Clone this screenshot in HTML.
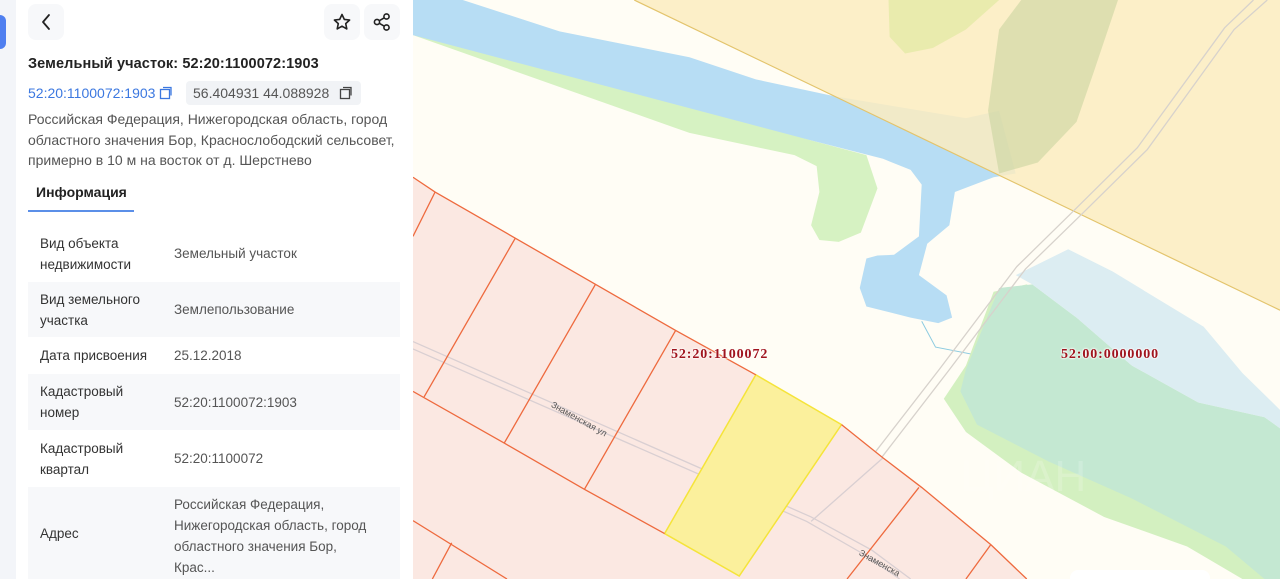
<!DOCTYPE html>
<html><head><meta charset="utf-8"><style>
*{margin:0;padding:0;box-sizing:border-box}
body{width:1280px;height:579px;overflow:hidden;position:relative;font-family:"Liberation Sans","Noto Sans CJK SC",sans-serif;background:#fffef7}
#strip{position:absolute;left:0;top:0;width:16px;height:579px;background:#f3f5f9}
#tab{position:absolute;left:0;top:15px;width:6px;height:34px;background:#4f7ff0;border-radius:0 6px 6px 0}
#panel{position:absolute;left:16px;top:0;width:397px;height:579px;background:#fff}
.btn{position:absolute;top:4px;width:36px;height:36px;border-radius:8px;background:#f7f8fa}
.t{position:absolute;white-space:nowrap}
table{position:absolute;left:28px;top:225px;width:372px;border-collapse:collapse;font-size:13.5px}
td{vertical-align:middle;line-height:21px}
td.k{color:#333;padding-left:12px;width:146px}
td.v{color:#555}
tr.g{background:#f7f8fa}
#map{position:absolute;left:413px;top:0;width:867px;height:579px;overflow:hidden}
.lbl{position:absolute;font-family:"Liberation Serif",serif;font-weight:bold;font-size:14px;letter-spacing:0.9px;color:#a0141e;text-shadow:0 0 2px #fff,0 0 2px #fff,0 0 2px #fff}
</style></head><body>
<div id="strip"></div><div id="tab"></div>
<div id="panel"></div>
<div class="btn" style="left:28px"><svg width="36" height="36"><path d="M21 11l-6 7 6 7" fill="none" stroke="#222" stroke-width="1.8" stroke-linecap="round" stroke-linejoin="round"/></svg></div>
<div class="btn" style="left:324px"><svg width="36" height="36"><path d="M18 10.5l2.3 4.9 5.3.6-3.9 3.6 1.1 5.3-4.8-2.7-4.8 2.7 1.1-5.3-3.9-3.6 5.3-.6z" fill="none" stroke="#222" stroke-width="1.6" stroke-linejoin="round"/></svg></div>
<div class="btn" style="left:364px"><svg width="36" height="36"><g fill="none" stroke="#222" stroke-width="1.6"><circle cx="22.5" cy="12.5" r="2.6"/><circle cx="13" cy="18" r="2.6"/><circle cx="22.5" cy="23.5" r="2.6"/><path d="M15.3 16.7l5-2.9M15.3 19.3l5 2.9"/></g></svg></div>
<div class="t" style="left:28px;top:56px;font-size:14.5px;font-weight:bold;color:#222;letter-spacing:0.1px">Земельный участок: 52:20:1100072:1903</div>
<div class="t" style="left:28px;top:85px;font-size:14px;color:#3c78e0">52:20:1100072:1903</div>
<svg style="position:absolute;left:159px;top:86px" width="14" height="14"><rect x="1.5" y="3.5" width="9" height="9" fill="none" stroke="#3c78e0" stroke-width="1.3"/><path d="M4 1.5h8v8" fill="none" stroke="#3c78e0" stroke-width="1.3"/></svg>
<div style="position:absolute;left:186px;top:81px;width:175px;height:24px;background:#f1f3f6;border-radius:4px"></div>
<div class="t" style="left:193px;top:85px;font-size:14px;color:#555">56.404931 44.088928</div>
<svg style="position:absolute;left:339px;top:86px" width="14" height="14"><rect x="1.5" y="3.5" width="9" height="9" fill="none" stroke="#444" stroke-width="1.3"/><path d="M4 1.5h8v8" fill="none" stroke="#444" stroke-width="1.3"/></svg>
<div class="t" style="left:28px;top:109px;font-size:14px;line-height:20.5px;color:#555">Российская Федерация, Нижегородская область, город<br>областного значения Бор, Краснослободский сельсовет,<br>примерно в 10 м на восток от д. Шерстнево</div>
<div class="t" style="left:36px;top:184px;font-size:14px;font-weight:bold;color:#222">Информация</div>
<div style="position:absolute;left:28px;top:210px;width:106px;height:2px;background:#5b8fe8"></div>
<table>
<tr style="height:57px"><td class="k">Вид объекта<br>недвижимости</td><td class="v">Земельный участок</td></tr>
<tr class="g" style="height:55px"><td class="k">Вид земельного<br>участка</td><td class="v">Землепользование</td></tr>
<tr style="height:37px"><td class="k">Дата присвоения</td><td class="v">25.12.2018</td></tr>
<tr class="g" style="height:56px"><td class="k">Кадастровый<br>номер</td><td class="v">52:20:1100072:1903</td></tr>
<tr style="height:57px"><td class="k">Кадастровый<br>квартал</td><td class="v">52:20:1100072</td></tr>
<tr class="g" style="height:92px"><td class="k">Адрес</td><td class="v" style="padding-top:6px">Российская Федерация,<br>Нижегородская область, город<br>областного значения Бор,<br>Крас...</td></tr>
</table>
<div id="map">
<svg width="867" height="579" viewBox="0 0 1568 1568" preserveAspectRatio="none" style="position:absolute;left:0;top:0">
<rect width="1568" height="1568" fill="#fffdf5"/>
<polygon points="0,95 500,360 690,420 730,450 735,520 720,610 735,650 770,655 810,630 840,510 820,420 720,380 0,60" fill="#d6f2c2"/>
<polygon points="0,0 90,0 265,85 500,155 620,215 760,260 1000,320 1060,300 1090,470 1050,480 980,520 970,610 930,660 915,745 965,800 975,860 950,875 900,860 820,830 808,780 820,700 840,692 870,690 915,640 920,500 900,460 850,430 720,380 0,95" fill="#b7ddf4"/>
<polygon points="400,0 1568,0 1568,840" fill="#fcecbf" opacity="0.85"/>
<line x1="400" y1="0" x2="1568" y2="840" stroke="#e3c46c" stroke-width="1.2" vector-effect="non-scaling-stroke"/>
<polygon points="860,0 1060,0 1000,80 940,130 890,145 862,100" fill="#e5eaa8" opacity="0.85"/>
<polygon points="1100,0 1275,0 1230,200 1200,330 1130,440 1060,470 1040,300 1060,80" fill="#c9d3a0" opacity="0.6"/>
<polyline points="920,870 945,940 1185,1010 1568,1260" fill="none" stroke="#8ccbe0" stroke-width="1" vector-effect="non-scaling-stroke"/>
<polygon points="1000,990 960,1080 1000,1170 1100,1280 1250,1400 1400,1480 1500,1568 1568,1568 1568,1160 1540,1130 1420,1090 1300,990 1200,860 1110,770 1050,790" fill="#d3f0c0"/>
<polygon points="1000,1000 1060,780 1120,770 1200,860 1300,990 1420,1090 1540,1130 1568,1160 1568,1568 1540,1568 1470,1480 1300,1350 1150,1250 1020,1150 990,1060" fill="#c4e8d2"/>
<polygon points="1090,745 1185,675 1265,735 1430,885 1500,1010 1568,1110 1568,1160 1540,1130 1420,1090 1300,990 1200,860 1120,770" fill="#dcedf2"/>
<g fill="none" stroke="#d7d2cc" stroke-width="1.3">
<polyline points="1520,0 1468,75 1310,400 1190,578 1092,722 952,1000 832,1232 712,1412" vector-effect="non-scaling-stroke"/>
<polyline points="1545,0 1485,80 1328,405 1208,582 1108,728 968,1005 848,1238 730,1425" vector-effect="non-scaling-stroke"/>
</g>
<polygon points="0,480 40,520 185,645 330,770 475,895 620,1015 775,1150 850,1240 920,1320 1045,1475 1110,1568 0,1568" fill="#fbe8e2"/>
<g fill="none" stroke="#d9cfd2" stroke-width="1.3">
<polyline points="0,925 720,1400 830,1490 900,1568" vector-effect="non-scaling-stroke"/>
<polyline points="0,945 712,1412 820,1505 880,1568" vector-effect="non-scaling-stroke"/>
<polyline points="720,1412 850,1240" vector-effect="non-scaling-stroke"/>
</g>
<polygon points="620,1015 775,1150 590,1560 455,1445" fill="#fbf09c" stroke="#f5e43a" stroke-width="1.5" vector-effect="non-scaling-stroke"/>
<g fill="none" stroke="#ee6a3e" stroke-width="1.3">
<polyline points="0,480 40,520 185,645 330,770 475,895 620,1015" vector-effect="non-scaling-stroke"/>
<polyline points="775,1150 850,1240 920,1320 1045,1475 1110,1568" vector-effect="non-scaling-stroke"/>
<line x1="40" y1="520" x2="0" y2="640" vector-effect="non-scaling-stroke"/>
<line x1="185" y1="645" x2="20" y2="1075" vector-effect="non-scaling-stroke"/>
<line x1="330" y1="770" x2="165" y2="1200" vector-effect="non-scaling-stroke"/>
<line x1="475" y1="895" x2="310" y2="1325" vector-effect="non-scaling-stroke"/>
<line x1="915" y1="1320" x2="785" y2="1568" vector-effect="non-scaling-stroke"/>
<line x1="1045" y1="1475" x2="1000" y2="1568" vector-effect="non-scaling-stroke"/>
<polyline points="0,1060 165,1200 310,1325 455,1445" vector-effect="non-scaling-stroke"/>
<polyline points="0,1410 170,1568" vector-effect="non-scaling-stroke"/>
<line x1="70" y1="1470" x2="35" y2="1568" vector-effect="non-scaling-stroke"/>
</g>
</svg>
<div class="lbl" style="left:258px;top:347px">52:20:1100072</div>
<div class="lbl" style="left:648px;top:347px">52:00:0000000</div>
<div class="t" style="left:135px;top:414px;font-size:9px;color:#555;transform:rotate(29deg)">Знаменская ул</div>
<div class="t" style="left:444px;top:558px;font-size:9px;color:#555;transform:rotate(29deg)">Знаменска</div>
<div class="t" style="left:548px;top:452px;font-size:44px;color:rgba(255,255,255,0.18)">ЦИАН</div>
<div style="position:absolute;left:657px;top:570px;width:140px;height:20px;background:#fff;border-radius:8px"></div>
</div>
</body></html>
